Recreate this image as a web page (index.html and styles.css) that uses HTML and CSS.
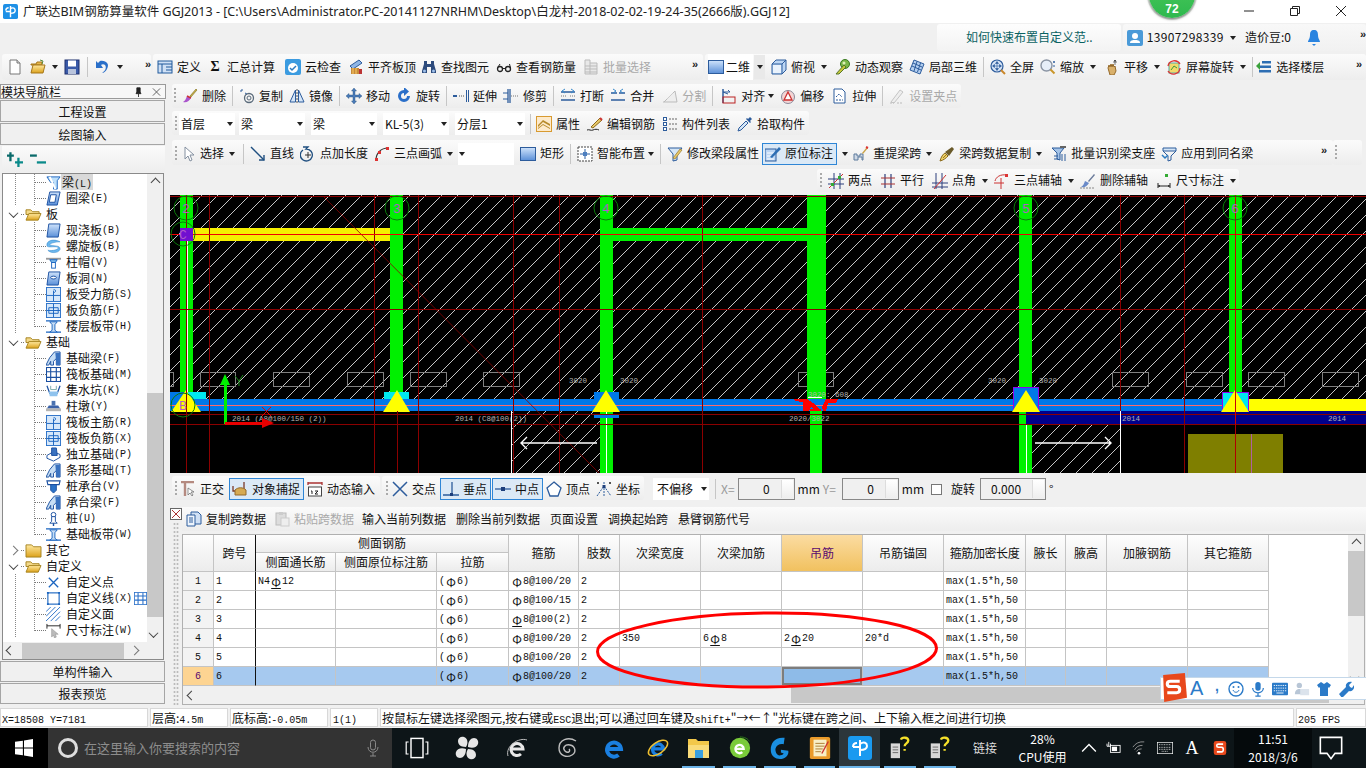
FILE: index.html
```html
<!DOCTYPE html>
<html lang="zh">
<head>
<meta charset="utf-8">
<title>广联达BIM钢筋算量软件 GGJ2013</title>
<link rel="stylesheet" href="styles.css">
</head>
<body>
<svg class="defs" aria-hidden="true">
<defs>
<linearGradient id="gb" x1="0" y1="0" x2="0" y2="1"><stop offset="0" stop-color="#cfe3fb"/><stop offset="1" stop-color="#5a8fd8"/></linearGradient>
<linearGradient id="gy" x1="0" y1="0" x2="0" y2="1"><stop offset="0" stop-color="#ffe9a0"/><stop offset="1" stop-color="#dca21c"/></linearGradient>
<pattern id="hatch" width="16" height="16" patternUnits="userSpaceOnUse"><path d="M-1 17 17 -1" stroke="#c4c4c4" stroke-width="1" shape-rendering="crispEdges"/></pattern>

<symbol id="i-doc" viewBox="0 0 16 16"><path d="M3 1h7l3 3v11H3z" fill="#fff" stroke="#777"/><path d="M10 1v3h3" fill="#ddd" stroke="#777"/></symbol>
<symbol id="i-open" viewBox="0 0 16 16"><path d="M1 5h5l1-2h5v3H1z" fill="#e8b84a" stroke="#a5761a"/><path d="M1 14l2-8h12l-2 8z" fill="url(#gy)" stroke="#a5761a"/><path d="M10 1l3 1-1 3" fill="none" stroke="#5a8a3a"/></symbol>
<symbol id="i-save" viewBox="0 0 16 16"><rect x="1" y="1" width="14" height="14" fill="#3a5aa8" stroke="#1d2f6d"/><rect x="4" y="1.500" width="8" height="6" fill="#fff"/><rect x="4" y="10" width="8" height="5" fill="#b9c4dc"/></symbol>
<symbol id="i-undo" viewBox="0 0 16 16"><path d="M5 2C11 1 15 5 12 10c-1 2-3 4-5 4 3-2 5-5 3-8-1-1-3-1-4 0l2 3H1V2l2 2z" fill="#2a6fc9"/></symbol>
<symbol id="i-def" viewBox="0 0 16 16"><rect x="1" y="2" width="14" height="12" fill="#cfe0f5" stroke="#215a9c"/><path d="M1 5h14M5 5v9M9 8h6M9 11h6" stroke="#215a9c"/></symbol>
<symbol id="i-cloud" viewBox="0 0 16 16"><rect x="0" y="0" width="16" height="16" rx="2" fill="#3b9be0"/><circle cx="8" cy="9" r="5" fill="#fff"/><path d="M5 9l2 2 4-4" stroke="#2a7ac0" stroke-width="1.500" fill="none"/></symbol>
<symbol id="i-flush" viewBox="0 0 16 16"><path d="M2 7L11 1l3 3-9 6z" fill="#8fb6e6" stroke="#2d5c9c"/><rect x="3" y="9" width="8" height="6" fill="#c58a3a"/><rect x="11" y="10" width="3" height="5" fill="#b33"/><path d="M5 9v6M8 9v6" stroke="#fc6"/></symbol>
<symbol id="i-bino" viewBox="0 0 16 16"><path d="M3 2h3v3h4V2h3v3l2 7v2H10V8H6v6H1v-2l2-7z" fill="#2d4b7c"/><circle cx="3.500" cy="12" r="1.500" fill="#9fc0ea"/><circle cx="12.500" cy="12" r="1.500" fill="#9fc0ea"/></symbol>
<symbol id="i-glass" viewBox="0 0 16 16"><circle cx="4" cy="10" r="2.500" fill="none" stroke="#222" stroke-width="1.300"/><circle cx="12" cy="10" r="2.500" fill="none" stroke="#222" stroke-width="1.300"/><path d="M6.500 9.500h3M2 8l2-3M14.500 9l-1-4" stroke="#222"/></symbol>
<symbol id="i-batch" viewBox="0 0 16 16"><path d="M2 1h5v3h7v11H2z" fill="#e8e8e8" stroke="#bbb"/><path d="M2 7h12M2 10h12M2 13h12M7 4v11" stroke="#bbb"/></symbol>
<symbol id="i-rect" viewBox="0 0 16 16"><rect x=".5" y="1.500" width="15" height="13" fill="url(#gb)" stroke="#2d5c9c"/></symbol>
<symbol id="i-top" viewBox="0 0 16 16"><path d="M1 5l4-4h10v10l-4 4H1z" fill="#bcd6f4" stroke="#2d5c9c"/><path d="M1 5h10v10M11 5l4-4" fill="none" stroke="#2d5c9c"/><rect x="2" y="6" width="8" height="8" fill="#e9f2fc"/></symbol>
<symbol id="i-orbit" viewBox="0 0 16 16"><circle cx="10" cy="5" r="4.500" fill="#7ab648" stroke="#3a7a22"/><path d="M1 15L9 6l2 2-7 7z" fill="#c8c83a" stroke="#56762a"/><circle cx="9" cy="4" r="1.500" fill="#dff0b8"/></symbol>
<symbol id="i-local" viewBox="0 0 16 16"><path d="M5 1l10 4-4 10L1 11z" fill="#b4cff0" stroke="#2d5c9c"/><path d="M4 4l9 4M3 7l9 4M8 2.500L5 12M11.500 4l-3 9" stroke="#2d5c9c"/></symbol>
<symbol id="i-full" viewBox="0 0 16 16"><circle cx="7" cy="7" r="6" fill="#d8e6f8" stroke="#2d5c9c" stroke-width="1.200"/><path d="M7 3v8M3 7h8M7 2.500L5.500 4.500h3zM7 11.500l-1.500-2h3zM2.500 7l2-1.500v3zM11.500 7l-2-1.500v3z" stroke="#2d5c9c" fill="#2d5c9c" stroke-width=".6"/><path d="M11 11l4 4" stroke="#c9862a" stroke-width="2"/></symbol>
<symbol id="i-zoom" viewBox="0 0 16 16"><circle cx="6.500" cy="6.500" r="5.500" fill="#e6eef8" stroke="#8a94a3" stroke-width="1.400"/><path d="M10.500 10.500l4 4" stroke="#c9962a" stroke-width="2"/><path d="M13 3h2M14 2v2M13 7h2" stroke="#2d5c9c"/></symbol>
<symbol id="i-pan" viewBox="0 0 16 16"><path d="M4 9l1-3 1 2 1-3 1 3 1-3 1 3 1-1 1 5-2 4H6z" fill="#d9b06a" stroke="#94692a"/><path d="M11 1v5M9 3h4M11 1l-1 1h2z" stroke="#444" fill="#444" stroke-width=".7"/></symbol>
<symbol id="i-scr" viewBox="0 0 16 16"><rect x="3" y="4" width="10" height="10" fill="#f3d96a" stroke="#5aa"/><path d="M5 11l3-4 3 2" stroke="#3a9a3a" fill="none"/><path d="M2 7a6.500 6.500 0 0 1 12-2M14 9a6.500 6.500 0 0 1-12 3" stroke="#d33" fill="none" stroke-width="1.300"/></symbol>
<symbol id="i-floor" viewBox="0 0 16 16"><path d="M6 2h9v2.500H6zM3 6.500h12V9H3zM3 11h12v2.500H3z" fill="#2d6eb3"/><path d="M0 7l4-4v8z" fill="#3aa13a"/></symbol>
<symbol id="i-del" viewBox="0 0 16 16"><path d="M8 8l6-7 1 1-6 7z" fill="#c9b24a" stroke="#7a6a1a" stroke-width=".6"/><path d="M9 10C7 13 5 15 1 14c2-1 3-3 4-6z" fill="#a5c"/><path d="M5 8l4 2" stroke="#c33" stroke-width="1.500"/></symbol>
<symbol id="i-copy" viewBox="0 0 16 16"><circle cx="10" cy="10" r="4.500" fill="none" stroke="#5a6a7a" stroke-width="1.300"/><circle cx="10" cy="10" r="2" fill="none" stroke="#5a6a7a"/><path d="M2 2h3M2 2v3M6 5L8 6" stroke="#2d5c9c" fill="none" stroke-dasharray="2 1"/></symbol>
<symbol id="i-mirror" viewBox="0 0 16 16"><path d="M6.500 2v12H1zM9.500 2v12H15z" fill="#d6e6f8" stroke="#2d5c9c"/><path d="M8 1v14" stroke="#555" stroke-dasharray="2 1"/></symbol>
<symbol id="i-move" viewBox="0 0 16 16"><path d="M8 0l2.500 3H9v4h4V5.500L16 8l-3 2.500V9H9v4h1.500L8 16l-2.500-3H7V9H3v1.500L0 8l3-2.500V7h4V3H5.500z" fill="#4a7ab8" stroke="#24507f" stroke-width=".4"/></symbol>
<symbol id="i-rot" viewBox="0 0 16 16"><path d="M8 2a6 6 0 1 0 6 6h-3a3 3 0 1 1-3-3v3l5-4.500L8-1z" fill="#2a6fc9"/></symbol>
<symbol id="i-ext" viewBox="0 0 16 16"><path d="M0 8h4" stroke="#2d5c9c" stroke-width="2"/><path d="M6 8h5" stroke="#555" stroke-dasharray="1 1"/><path d="M13.500 2v12M15.500 2v12" stroke="#2d5c9c"/></symbol>
<symbol id="i-trim" viewBox="0 0 16 16"><path d="M5 1v14M7 1v14" stroke="#2d5c9c" stroke-width="1.300"/><path d="M0 5h5M0 11h5" stroke="#2d5c9c"/><path d="M8 8h7" stroke="#777" stroke-dasharray="1 1"/></symbol>
<symbol id="i-brk" viewBox="0 0 16 16"><path d="M1 4h14M1 12h14" stroke="#2d5c9c" stroke-width="1.500" fill="none"/><path d="M5 1L2 3l3 2M11 1l3 2-3 2" stroke="#3a8acb" fill="none"/><path d="M1 8h5M10 8h5" stroke="#777" stroke-dasharray="1 1"/></symbol>
<symbol id="i-mrg" viewBox="0 0 16 16"><path d="M1 5h6M9 5h6M1 12h14" stroke="#2d5c9c" stroke-width="1.500"/><path d="M3 1l3 2-3 2M13 1l-3 2 3 2" stroke="#3a8acb" fill="none"/></symbol>
<symbol id="i-split" viewBox="0 0 16 16"><path d="M1 14h14M2 14L13 3l2 11" fill="#eee" stroke="#bbb"/><path d="M5 11l6-6" stroke="#ccc"/></symbol>
<symbol id="i-align" viewBox="0 0 16 16"><path d="M2 1v14" stroke="#2d5c9c" stroke-width="1.500"/><path d="M2 4h7l-2-2M2 4l5 2" stroke="#2d5c9c" fill="none"/><rect x="2" y="9" width="12" height="6" fill="none" stroke="#b22"/></symbol>
<symbol id="i-off" viewBox="0 0 16 16"><circle cx="8" cy="9" r="6.500" fill="#f4d5d5" stroke="#8a8a9a"/><path d="M8 4l4 8H4z" fill="#fff" stroke="#c33" stroke-width="1.300"/></symbol>
<symbol id="i-str" viewBox="0 0 16 16"><path d="M2 1h8l3 3v11H2z" fill="#fff" stroke="#2d5c9c"/><path d="M4 12h7M4 9l3-3 3 3" stroke="#2d5c9c" stroke-dasharray="2 1" fill="none"/></symbol>
<symbol id="i-grip" viewBox="0 0 16 16"><path d="M2 14l9-12 3 2-9 11z" fill="#eee" stroke="#c4c4c4"/><path d="M1 15h4M8 15h5" stroke="#bbb" stroke-dasharray="2 1"/></symbol>
<symbol id="i-attr" viewBox="0 0 16 16"><rect x=".5" y=".5" width="15" height="15" fill="#fdeacb" stroke="#d89a30"/><path d="M2 9l5-5 7 4v2l-7-4-5 5zM2 12l5-4 7 4v1l-7-4-5 4z" fill="#b78a2a"/></symbol>
<symbol id="i-edit" viewBox="0 0 16 16"><path d="M4 11L13 2l2 2-9 8z" fill="#e7c86a" stroke="#8b6a1a"/><path d="M13 2l2 2" stroke="#c33" stroke-width="2"/><path d="M0 14c2-1 4 1 6 0s4-1 6 0" stroke="#222" fill="none"/></symbol>
<symbol id="i-list" viewBox="0 0 16 16"><rect x="1.500" y="1.500" width="3" height="3" fill="#fff" stroke="#2d5c9c"/><rect x="1.500" y="6.500" width="3" height="3" fill="#fff" stroke="#2d5c9c"/><rect x="1.500" y="11.500" width="3" height="3" fill="#fff" stroke="#2d5c9c"/><path d="M7 3h8M7 8h8M7 13h8" stroke="#666" stroke-dasharray="2 1"/></symbol>
<symbol id="i-pick" viewBox="0 0 16 16"><path d="M1 15l1-3 7-7 2 2-7 7z" fill="#d5e6f7" stroke="#2d5c9c"/><path d="M9 3l4 4 1-1-1-1 2-2-2-2-2 2-1-1z" fill="#2d5c9c"/></symbol>
<symbol id="i-sel" viewBox="0 0 16 16"><path d="M5 1v12l3-3 2 5 2-1-2-5h4z" fill="#fff" stroke="#8490a0"/></symbol>
<symbol id="i-line" viewBox="0 0 16 16"><path d="M1 1l13 13" stroke="#1f4f80" stroke-width="1.400"/><path d="M14 9v5H9" fill="none" stroke="#1f4f80" stroke-width="1.400"/></symbol>
<symbol id="i-len" viewBox="0 0 16 16"><path d="M3 1h5l-2 2a6 6 0 1 1-3 1" fill="none" stroke="#1f4f80" stroke-width="1.300"/><path d="M8 6v6M5 9h6" stroke="#333"/></symbol>
<symbol id="i-arc" viewBox="0 0 16 16"><path d="M2 14C2 7 7 2 14 2" fill="none" stroke="#333" stroke-width="1.200"/><rect x="1" y="12" width="3" height="3" fill="#d33"/><rect x="4" y="5" width="3" height="3" fill="#d33"/><rect x="12" y="1" width="3" height="3" fill="#d33"/></symbol>
<symbol id="i-smart" viewBox="0 0 16 16"><rect x="1" y="1" width="14" height="14" fill="#fff" stroke="#444" stroke-dasharray="2 1"/><path d="M8 3v10M3 8h10" stroke="#2d5c9c"/><rect x="6" y="6" width="4" height="4" fill="#4d7fc0"/></symbol>
<symbol id="i-funnel" viewBox="0 0 16 16"><path d="M1 2h14l-5 6v6l-4 1V8z" fill="#d5e6f7" stroke="#2d5c9c"/><path d="M6 12l7-9 2 1-7 9z" fill="#e7c86a" stroke="#8b6a1a" stroke-width=".6"/></symbol>
<symbol id="i-orig" viewBox="0 0 16 16"><rect x="0" y="3" width="11" height="12" fill="#bcd6f4" stroke="#2d5c9c"/><path d="M2 7h7M2 10h7M2 13h7" stroke="#fff"/><path d="M5 11L14 1l2 2-9 9z" fill="#2d6eb3"/></symbol>
<symbol id="i-rebeam" viewBox="0 0 16 16"><path d="M1 14V8h3v2h3V8h3v6h-1v-3H5v3z" fill="#cfd9e6" stroke="#5c7a9c"/><path d="M9 7l5-6 1 1-5 6z" fill="#c9a44a"/><path d="M13 1l2 1" stroke="#d33" stroke-width="2"/></symbol>
<symbol id="i-spancopy" viewBox="0 0 16 16"><path d="M1 15c1-4 3-7 5-8l3 3c-2 2-4 4-8 5z" fill="#ecd06a" stroke="#8b6a1a"/><path d="M6 6l7-5 2 2-5 7z" fill="#6a5a2a"/><path d="M4 12l3-3" stroke="#a07a18"/></symbol>
<symbol id="i-batchid" viewBox="0 0 16 16"><path d="M1 2h12l-4 5v7l-3-1V7z" fill="#a5c4e8" stroke="#2d5c9c"/><path d="M3 10h4M3 13h4M11 8v7M14 8v7" stroke="#2d5c9c"/><path d="M9 1l6 0" stroke="#666" stroke-width="2"/></symbol>
<symbol id="i-apply" viewBox="0 0 16 16"><path d="M2 2h13v3H2z" fill="#d5e6f7" stroke="#2d5c9c"/><path d="M2 5l5 5v5l3-1v-4l5-5" fill="none" stroke="#2d5c9c"/><path d="M1 9l3 3 3-3" stroke="#2a7ac0" fill="none" stroke-width="1.500"/></symbol>
<symbol id="i-two" viewBox="0 0 16 16"><path d="M6 0v16M12 0v16M0 6h16M0 11h16" stroke="#2d3f7c"/><path d="M1 15L15 1" stroke="#c33"/><rect x="3" y="10" width="3" height="3" fill="#3a3"/><rect x="10" y="3" width="3" height="3" fill="#3a3"/></symbol>
<symbol id="i-para" viewBox="0 0 16 16"><path d="M5 1v14M11 1v14" stroke="#2d3f7c" stroke-width="1.200"/><path d="M1 5h14M1 11h14" stroke="#a33" stroke-width="1.200"/></symbol>
<symbol id="i-ang" viewBox="0 0 16 16"><path d="M4 0v16M10 0v16M0 10h16M0 14h16" stroke="#2d3f7c"/><path d="M2 16L14 2" stroke="#c33"/></symbol>
<symbol id="i-arc3" viewBox="0 0 16 16"><path d="M1 8C2 4 6 1 13 2" fill="none" stroke="#c33"/><path d="M7 5v11M0 10h10" stroke="#c33"/><rect x="11" y="1" width="3" height="3" fill="#d33"/></symbol>
<symbol id="i-delaxis" viewBox="0 0 16 16"><path d="M8 8l6-7 1 1-6 7z" fill="#6a7a9a"/><path d="M9 10C7 13 5 15 1 14c2-1 3-3 4-6z" fill="#6a8ac8"/><path d="M0 15h14" stroke="#888" stroke-dasharray="2 1"/></symbol>
<symbol id="i-dim" viewBox="0 0 16 16"><rect x="9" y="1" width="3" height="3" fill="#3a3"/><path d="M2 10v5M14 10v5M2 13h12" stroke="#222"/><path d="M2 13l2-1v2zM14 13l-2-1v2z" fill="#222"/></symbol>
<symbol id="i-ortho" viewBox="0 0 16 16"><path d="M1 1h13M5 1v14" stroke="#b58a80" stroke-width="2.400"/><path d="M8 7v7l2-2 2 3 1-1-2-3h3z" fill="#fff" stroke="#666" stroke-width=".7"/></symbol>
<symbol id="i-snap" viewBox="0 0 16 16"><path d="M1 5v5h3M12 1v9" stroke="#7a3a2a" stroke-width="1.300" fill="none"/><path d="M3 9c3-3 8-3 11 0v5H3z" fill="#d6aa52" stroke="#94692a"/></symbol>
<symbol id="i-dyn" viewBox="0 0 16 16"><path d="M1 1v3M15 1v3M1 2h14" stroke="#a33" stroke-width="1.300"/><rect x="1.500" y="6" width="13" height="9" fill="#fff" stroke="#444"/><path d="M4 10h1v3M8 10h3l-3 3h3" fill="none" stroke="#222"/></symbol>
<symbol id="i-cross" viewBox="0 0 16 16"><path d="M1 1l14 14M15 1L1 15" stroke="#2d5c9c" stroke-width="1.500"/></symbol>
<symbol id="i-perp" viewBox="0 0 16 16"><path d="M0 14h16M9 1v13" stroke="#2d5c9c" stroke-width="1.300"/><rect x="7" y="12" width="3" height="3" fill="#1d3f7c"/></symbol>
<symbol id="i-mid" viewBox="0 0 16 16"><path d="M0 8h16" stroke="#2d5c9c" stroke-width="1.300"/><rect x="6" y="6" width="4" height="4" fill="#1d3f7c"/></symbol>
<symbol id="i-vert" viewBox="0 0 16 16"><path d="M8 1l7 6-3 8H4L1 7z" fill="#fff" stroke="#2d5c9c" stroke-width="1.300"/></symbol>
<symbol id="i-coord" viewBox="0 0 16 16"><path d="M1 15L8 5M8 5l7 10M8 1v14" stroke="#2d5c9c" stroke-dasharray="2 1" fill="none"/><rect x="6.500" y="4" width="3" height="3" fill="#1d3f7c"/><rect x="1" y="1" width="2" height="2" fill="#555"/><rect x="13" y="1" width="2" height="2" fill="#555"/></symbol>
<symbol id="i-cpd" viewBox="0 0 16 16"><path d="M5 1h7l3 3v9H5z" fill="#cfe0f5" stroke="#2d5c9c"/><path d="M1 4h8v11H1z" fill="#eef5fd" stroke="#2d5c9c"/><path d="M3 7h4M3 9h4M3 11h4" stroke="#2d5c9c"/></symbol>
<symbol id="i-pst" viewBox="0 0 16 16"><rect x="2" y="2" width="10" height="12" fill="#ddd" stroke="#bbb"/><rect x="5" y="1" width="4" height="3" fill="#ccc"/><rect x="7" y="7" width="8" height="8" fill="#eee" stroke="#ccc"/></symbol>

<symbol id="t-beam" viewBox="0 0 16 16"><path d="M1 2h14l-3 4v9H8V8H5z" fill="#bfe0fa" stroke="#1a64c0"/><path d="M4 2l6 13" stroke="#fff" stroke-width="2"/></symbol>
<symbol id="t-ring" viewBox="0 0 16 16"><path d="M4 1h11l-3 14H1z" fill="url(#gb)" stroke="#1a4fa0"/><path d="M5 4h6L9.500 12H3.500z" fill="#fff" stroke="#1a4fa0"/></symbol>
<symbol id="t-slab" viewBox="0 0 16 16"><path d="M3 1h12l-2 14H1z" fill="url(#gb)" stroke="#1a4fa0"/></symbol>
<symbol id="t-spiral" viewBox="0 0 16 16"><path d="M15 3C8-1 0 2 1 7c0 3 9 0 12 2 1 2-5 4-11 3 2 3 11 4 13-1 1-5-9-3-11-5 0-1 5-3 11-3z" fill="#6cb8ee" stroke="#2a80c8" stroke-width=".5"/></symbol>
<symbol id="t-cap" viewBox="0 0 16 16"><path d="M0 3h16v2H0z" fill="#9a9a9a"/><path d="M4 5h8l-2 3H6z" fill="#7ab8ea" stroke="#1a64c0"/><rect x="6" y="8" width="4" height="6" fill="#fff" stroke="#1a64c0"/></symbol>
<symbol id="t-hole" viewBox="0 0 16 16"><path d="M3 1h12l-2 14H1z" fill="url(#gb)" stroke="#1a4fa0"/><ellipse cx="8" cy="7" rx="3" ry="1.500" fill="#fff" stroke="#1a4fa0"/></symbol>
<symbol id="t-grid1" viewBox="0 0 16 16"><rect x=".5" y=".5" width="15" height="15" fill="#d7e8fa" stroke="#2a70c8"/><path d="M1 9h14M8 4v11" stroke="#1a64c0"/><path d="M8 3c3-1 3 3 0 3" fill="none" stroke="#1a64c0"/></symbol>
<symbol id="t-grid2" viewBox="0 0 16 16"><rect x=".5" y=".5" width="15" height="15" fill="#d7e8fa" stroke="#2a70c8"/><path d="M1 8h14M8 1v14M3 5h10v6H3z" fill="none" stroke="#1a64c0"/></symbol>
<symbol id="t-band" viewBox="0 0 16 16"><path d="M0 2h16M0 14h16" stroke="#1a64c0" stroke-width="1.500"/><path d="M4 3h8L9.500 6v6L12 14H4l2.500-2V6z" fill="#c7def5" stroke="#1a64c0"/></symbol>
<symbol id="t-fbeam" viewBox="0 0 16 16"><path d="M0 15l4-8 5-6h6v14h-4V8L8 11v4H5v-4l-2 4z" fill="#c7def5" stroke="#1a4fa0"/><path d="M10 2h5v13h-4z" fill="#3a72c0"/></symbol>
<symbol id="t-raft" viewBox="0 0 16 16"><rect x=".5" y=".5" width="15" height="15" fill="#fff" stroke="#1a4fa0" stroke-width="1.200"/><path d="M5 1v14M11 1v14M1 5h14M1 11h14" stroke="#1a4fa0" stroke-width="1.200"/></symbol>
<symbol id="t-sump" viewBox="0 0 16 16"><path d="M1 3l3 8h8l3-8" fill="none" stroke="#1a4fa0" stroke-width="1.300"/><path d="M3 9h10l-1 5H4z" fill="#8fc3ee"/><path d="M5 3v4h6V3" fill="none" stroke="#7aa"/></symbol>
<symbol id="t-pier" viewBox="0 0 16 16"><rect x="6" y="2" width="4" height="5" fill="#4a72b0"/><path d="M3 7h10l2 3H1z" fill="#3a62a8"/><rect x="0" y="10" width="16" height="3" fill="#b4b4b4"/></symbol>
<symbol id="t-iso" viewBox="0 0 16 16"><path d="M1 9l7-4 7 3v3l-7 4-7-3z" fill="#fff" stroke="#1a4fa0"/><path d="M6 1h5l1 8H6z" fill="#3a72c0" stroke="#1a4fa0"/></symbol>
<symbol id="t-pile" viewBox="0 0 16 16"><path d="M1 2h14l-1 4H2z" fill="#fff" stroke="#1a4fa0" stroke-width="1.200"/><path d="M5 6h6v6l-3 3-3-3z" fill="#2a72c8" stroke="#1a4fa0"/></symbol>
<symbol id="t-p" viewBox="0 0 16 16"><circle cx="8" cy="4" r="2.500" fill="#fff" stroke="#1a4fa0"/><path d="M6 6h4v5l2 2H4l2-2z" fill="#fff" stroke="#1a4fa0"/><path d="M8 13v3" stroke="#1a4fa0" stroke-width="1.500"/></symbol>
<symbol id="t-x" viewBox="0 0 16 16"><path d="M3 3l10 10M13 3L3 13" stroke="#1a64c0" stroke-width="1.400"/></symbol>
<symbol id="t-sq" viewBox="0 0 16 16"><rect x="2" y="2" width="12" height="12" fill="#fff" stroke="#1a64c0" stroke-width="1.200"/><path d="M1 1h2v2H1zM13 1h2v2h-2zM1 13h2v2H1zM13 13h2v2h-2z" fill="#1a64c0"/></symbol>
<symbol id="t-hat" viewBox="0 0 16 16"><path d="M0 5l5-5M0 10L10 0M0 15L15 0M5 15L15 5M10 15l5-5" stroke="#2a70c8"/></symbol>
<symbol id="t-dim" viewBox="0 0 16 16"><path d="M1 1v5M15 1v5M1 3h14" stroke="#222"/><path d="M6 6v9l2-2 1 3 2-1-1-3h3z" fill="#bbb" stroke="#888" stroke-width=".5"/></symbol>
<symbol id="t-folder" viewBox="0 0 18 16"><path d="M1 3h5l2 2h7v3H1z" fill="#f3d98a" stroke="#a5821e"/><path d="M1 14L4 7h13l-3 7z" fill="url(#gy)" stroke="#a5821e"/></symbol>
<symbol id="t-fclose" viewBox="0 0 18 16"><path d="M1 2h6l2 2h8v11H1z" fill="url(#gy)" stroke="#a5821e"/></symbol>
<symbol id="t-mini" viewBox="0 0 16 16"><rect x=".5" y=".5" width="15" height="15" fill="#fff" stroke="#2a70c8"/><path d="M5 1v14M11 1v14M1 5h4M11 5h4M1 10h4M11 10h4M5 5h6M5 10h6" stroke="#2a70c8" stroke-width="1.300"/></symbol>
</defs>
</svg>

<div class="app">
  <header class="title">
    <svg class="applogo" viewBox="0 0 16 16"><rect width="16" height="16" rx="2" fill="#1e90e6"/><path d="M8 2v12M8 5c3-2 5 0 5 2s-2 3-5 3M8 8H3M6 4c-2 0-3 1-3 3" fill="none" stroke="#fff" stroke-width="1.500"/></svg>
    <span class="title-text">广联达BIM钢筋算量软件 GGJ2013 - [C:\Users\Administrator.PC-20141127NRHM\Desktop\白龙村-2018-02-02-19-24-35(2666版).GGJ12]</span>
    <span class="badge">72</span>
    <div class="winctl">
      <svg viewBox="0 0 12 12"><path d="M1 6h10" stroke="#222"/></svg>
      <svg viewBox="0 0 12 12"><path d="M1.500 3.500h7v7h-7zM3.500 3.500v-2h7v7h-2" fill="none" stroke="#222"/></svg>
      <svg viewBox="0 0 12 12"><path d="M1 1l10 10M11 1L1 11" stroke="#222"/></svg>
    </div>
  </header>

  <div class="noticebar">
    <div class="notice">如何快速布置自定义范..</div>
    <div class="user">
      <svg class="ic" viewBox="0 0 16 16"><rect width="16" height="16" rx="2" fill="#4a9ad8"/><circle cx="8" cy="6" r="3" fill="#fff"/><path d="M3 13c0-3 3-3 5-3s5 0 5 3z" fill="#fff"/></svg>
      <span class="phone">13907298339</span><i class="dd"></i>
      <span class="bean">造价豆:0</span>
      <svg class="bell" viewBox="0 0 14 18"><path d="M7 1c3 0 4 2 4 5 0 4 2 5 2 7H1c0-2 2-3 2-7 0-3 1-5 4-5z" fill="#2a84e0"/><path d="M5 15h4l-2 2z" fill="#2a84e0"/></svg>
      <span class="more">»</span>
    </div>
  </div>

  <div class="tbrow rowa">
    <div class="tb g1">
      <svg class="ic"><use href="#i-doc"/></svg>
      <svg class="ic"><use href="#i-open"/></svg><i class="dd"></i>
      <svg class="ic"><use href="#i-save"/></svg><i class="sep"></i>
      <svg class="ic"><use href="#i-undo"/></svg><i class="dd"></i>
      <span class="more">»</span>
    </div>
    <div class="tb g2">
      <span class="ti"><svg class="ic"><use href="#i-def"/></svg>定义</span>
      <span class="ti"><b class="sigma">Σ</b>汇总计算</span>
      <span class="ti"><svg class="ic"><use href="#i-cloud"/></svg>云检查</span>
      <span class="ti"><svg class="ic"><use href="#i-flush"/></svg>平齐板顶</span>
      <span class="ti"><svg class="ic"><use href="#i-bino"/></svg>查找图元</span>
      <span class="ti"><svg class="ic"><use href="#i-glass"/></svg>查看钢筋量</span>
      <span class="ti off"><svg class="ic"><use href="#i-batch"/></svg>批量选择</span>
      <span class="more push">»</span>
    </div>
    <div class="tb g3">
      <span class="ti lit"><svg class="ic"><use href="#i-rect"/></svg>二维</span><span class="ddbox"><i class="dd"></i></span>
      <span class="ti"><svg class="ic"><use href="#i-top"/></svg>俯视</span><i class="dd"></i>
      <span class="ti nudge2"><svg class="ic"><use href="#i-orbit"/></svg>动态观察</span>
      <span class="ti"><svg class="ic"><use href="#i-local"/></svg>局部三维</span><i class="sep"></i>
      <span class="ti"><svg class="ic"><use href="#i-full"/></svg>全屏</span>
      <span class="ti"><svg class="ic"><use href="#i-zoom"/></svg>缩放</span><i class="dd"></i>
      <span class="ti nudge2"><svg class="ic"><use href="#i-pan"/></svg>平移</span><i class="dd"></i>
      <span class="ti"><svg class="ic"><use href="#i-scr"/></svg>屏幕旋转</span><i class="dd"></i><i class="sep"></i>
      <span class="ti back3"><svg class="ic"><use href="#i-floor"/></svg>选择楼层</span>
      <span class="more push">»</span>
    </div>
  </div>

  <main class="main">
    <aside class="nav">
      <div class="nav-head"><span>模块导航栏</span><span class="nav-ctl"><svg viewBox="0 0 10 12"><path d="M3 1h4v5l1 2H2l1-2zM5 8v4" fill="#222" stroke="#222"/></svg><svg viewBox="0 0 10 10"><path d="M1 1l8 8M9 1L1 9" stroke="#555"/></svg></span></div>
      <div class="nav-btn">工程设置</div>
      <div class="nav-btn">绘图输入</div>
      <div class="nav-tools">
        <svg viewBox="0 0 14 14"><path d="M3 1v8M0 4h6" stroke="#0a6a6a" stroke-width="2"/><path d="M10 6v8M7 10h7" stroke="#0a8a8a" stroke-width="2"/></svg>
        <svg viewBox="0 0 14 14"><path d="M0 4h6" stroke="#0a6a6a" stroke-width="2"/><path d="M6 10h8" stroke="#0a8a8a" stroke-width="2"/></svg>
      </div>
      <div class="tree-box">
        <div class="tree-main">
          <div class="tree">
            <div class="row child sel-row"><i class="tick"></i><svg class="tic"><use href="#t-beam"/></svg><span class="sel">梁<i class="k">(L)</i></span></div>
            <div class="row child"><i class="tick"></i><svg class="tic"><use href="#t-ring"/></svg>圈梁<i class="k">(E)</i></div>
            <div class="row grp open"><i class="chev down"></i><i class="gtick"></i><svg class="fic"><use href="#t-folder"/></svg>板</div>
            <div class="row child"><i class="tick"></i><svg class="tic"><use href="#t-slab"/></svg>现浇板<i class="k">(B)</i></div>
            <div class="row child"><i class="tick"></i><svg class="tic"><use href="#t-spiral"/></svg>螺旋板<i class="k">(B)</i></div>
            <div class="row child"><i class="tick"></i><svg class="tic"><use href="#t-cap"/></svg>柱帽<i class="k">(V)</i></div>
            <div class="row child"><i class="tick"></i><svg class="tic"><use href="#t-hole"/></svg>板洞<i class="k">(N)</i></div>
            <div class="row child"><i class="tick"></i><svg class="tic"><use href="#t-grid1"/></svg>板受力筋<i class="k">(S)</i></div>
            <div class="row child"><i class="tick"></i><svg class="tic"><use href="#t-grid2"/></svg>板负筋<i class="k">(F)</i></div>
            <div class="row child last"><i class="tick"></i><svg class="tic"><use href="#t-band"/></svg>楼层板带<i class="k">(H)</i></div>
            <div class="row grp open"><i class="chev down"></i><i class="gtick"></i><svg class="fic"><use href="#t-folder"/></svg>基础</div>
            <div class="row child noroot"><i class="tick"></i><svg class="tic"><use href="#t-fbeam"/></svg>基础梁<i class="k">(F)</i></div>
            <div class="row child noroot"><i class="tick"></i><svg class="tic"><use href="#t-raft"/></svg>筏板基础<i class="k">(M)</i></div>
            <div class="row child noroot"><i class="tick"></i><svg class="tic"><use href="#t-sump"/></svg>集水坑<i class="k">(K)</i></div>
            <div class="row child noroot"><i class="tick"></i><svg class="tic"><use href="#t-pier"/></svg>柱墩<i class="k">(Y)</i></div>
            <div class="row child noroot"><i class="tick"></i><svg class="tic"><use href="#t-grid1"/></svg>筏板主筋<i class="k">(R)</i></div>
            <div class="row child noroot"><i class="tick"></i><svg class="tic"><use href="#t-grid2"/></svg>筏板负筋<i class="k">(X)</i></div>
            <div class="row child noroot"><i class="tick"></i><svg class="tic"><use href="#t-iso"/></svg>独立基础<i class="k">(P)</i></div>
            <div class="row child noroot"><i class="tick"></i><svg class="tic"><use href="#t-fbeam"/></svg>条形基础<i class="k">(T)</i></div>
            <div class="row child noroot"><i class="tick"></i><svg class="tic"><use href="#t-pile"/></svg>桩承台<i class="k">(V)</i></div>
            <div class="row child noroot"><i class="tick"></i><svg class="tic"><use href="#t-fbeam"/></svg>承台梁<i class="k">(F)</i></div>
            <div class="row child noroot"><i class="tick"></i><svg class="tic"><use href="#t-p"/></svg>桩<i class="k">(U)</i></div>
            <div class="row child noroot last"><i class="tick"></i><svg class="tic"><use href="#t-band"/></svg>基础板带<i class="k">(W)</i></div>
            <div class="row grp"><i class="chev"></i><i class="gtick"></i><svg class="fic"><use href="#t-fclose"/></svg>其它</div>
            <div class="row grp open"><i class="chev down"></i><i class="gtick"></i><svg class="fic"><use href="#t-folder"/></svg>自定义</div>
            <div class="row child"><i class="tick"></i><svg class="tic"><use href="#t-x"/></svg>自定义点</div>
            <div class="row child"><i class="tick"></i><svg class="tic"><use href="#t-sq"/></svg>自定义线<i class="k">(X)</i><svg class="tic mini"><use href="#t-mini"/></svg></div>
            <div class="row child"><i class="tick"></i><svg class="tic"><use href="#t-hat"/></svg>自定义面</div>
            <div class="row child last"><i class="tick"></i><svg class="tic"><use href="#t-dim"/></svg>尺寸标注<i class="k">(W)</i></div>
          </div>
          <div class="vbar navv"><span class="arr"><i class="chev up"></i></span><span class="track"><b class="thumb navt"></b></span><span class="arr"><i class="chev down"></i></span></div>
        </div>
        <div class="hbar navh"><span class="arr"><i class="chev left"></i></span><b class="hthumb"></b><span class="arr"><i class="chev"></i></span></div>
      </div>
      <div class="nav-btn low">单构件输入</div>
      <div class="nav-btn low">报表预览</div>
    </aside>

    <section class="work">
      <div class="tbrow rowb">
        <div class="tb gb">
          <i class="handle"></i>
          <span class="ti"><svg class="ic"><use href="#i-del"/></svg>删除</span><i class="sep"></i>
          <span class="ti"><svg class="ic"><use href="#i-copy"/></svg>复制</span>
          <span class="ti"><svg class="ic"><use href="#i-mirror"/></svg>镜像</span><i class="sep"></i>
          <span class="ti"><svg class="ic"><use href="#i-move"/></svg>移动</span>
          <span class="ti"><svg class="ic"><use href="#i-rot"/></svg>旋转</span><i class="sep"></i>
          <span class="ti"><svg class="ic"><use href="#i-ext"/></svg>延伸</span>
          <span class="ti"><svg class="ic"><use href="#i-trim"/></svg>修剪</span><i class="sep"></i>
          <span class="ti"><svg class="ic"><use href="#i-brk"/></svg>打断</span>
          <span class="ti"><svg class="ic"><use href="#i-mrg"/></svg>合并</span>
          <span class="ti off nudge2"><svg class="ic"><use href="#i-split"/></svg>分割</span><i class="sep"></i>
          <span class="ti nudge2"><svg class="ic"><use href="#i-align"/></svg>对齐<i class="dd tight"></i></span>
          <span class="ti"><svg class="ic"><use href="#i-off"/></svg>偏移</span>
          <span class="ti nudge2"><svg class="ic"><use href="#i-str"/></svg>拉伸</span><i class="sep"></i>
          <span class="ti off"><svg class="ic"><use href="#i-grip"/></svg>设置夹点</span>
        </div>
      </div>
      <div class="tbrow rowc">
        <div class="tb gc">
          <i class="handle"></i>
          <span class="combo c56">首层<i class="dd"></i></span>
          <span class="combo c66">梁<i class="dd"></i></span>
          <span class="combo c66">梁<i class="dd"></i></span>
          <span class="combo c66">KL-5(3)<i class="dd"></i></span>
          <span class="combo c70">分层1<i class="dd"></i></span><i class="sep"></i>
          <span class="ti"><svg class="ic"><use href="#i-attr"/></svg>属性</span>
          <span class="ti"><svg class="ic"><use href="#i-edit"/></svg>编辑钢筋</span>
          <span class="ti"><svg class="ic"><use href="#i-list"/></svg>构件列表</span>
          <span class="ti"><svg class="ic"><use href="#i-pick"/></svg>拾取构件</span>
        </div>
      </div>
      <div class="tbrow rowd">
        <div class="tb gd">
          <i class="handle"></i>
          <span class="ti"><svg class="ic"><use href="#i-sel"/></svg>选择</span><i class="dd"></i><i class="sep nudge3"></i>
          <span class="ti"><svg class="ic"><use href="#i-line"/></svg>直线</span>
          <span class="ti"><svg class="ic"><use href="#i-len"/></svg>点加长度</span>
          <span class="ti"><svg class="ic"><use href="#i-arc"/></svg>三点画弧</span><i class="dd"></i>
          <span class="combo c56"><i class="dd"></i></span>
          <span class="ti"><svg class="ic"><use href="#i-rect"/></svg>矩形</span><i class="sep"></i>
          <span class="ti"><svg class="ic"><use href="#i-smart"/></svg>智能布置<i class="dd tight"></i></span><i class="sep"></i>
          <span class="ti"><svg class="ic"><use href="#i-funnel"/></svg>修改梁段属性</span>
          <span class="ti on back3"><svg class="ic"><use href="#i-orig"/></svg>原位标注</span><i class="dd"></i>
          <span class="ti"><svg class="ic"><use href="#i-rebeam"/></svg>重提梁跨</span><i class="dd"></i>
          <span class="ti nudge2"><svg class="ic"><use href="#i-spancopy"/></svg>梁跨数据复制</span><i class="dd"></i>
          <span class="ti nudge4"><svg class="ic"><use href="#i-batchid"/></svg>批量识别梁支座</span>
          <span class="ti"><svg class="ic"><use href="#i-apply"/></svg>应用到同名梁</span>
          <span class="more push">»</span>
        </div>
        <div class="tb gd2"><i class="handle"></i></div>
      </div>
      <div class="tbrow rowe">
        <div class="tb ge">
          <i class="handle"></i>
          <span class="ti"><svg class="ic"><use href="#i-two"/></svg>两点</span>
          <span class="ti"><svg class="ic"><use href="#i-para"/></svg>平行</span>
          <span class="ti"><svg class="ic"><use href="#i-ang"/></svg>点角</span><i class="dd"></i>
          <span class="ti"><svg class="ic"><use href="#i-arc3"/></svg>三点辅轴</span><i class="dd"></i>
          <span class="ti"><svg class="ic"><use href="#i-delaxis"/></svg>删除辅轴</span>
          <span class="ti"><svg class="ic"><use href="#i-dim"/></svg>尺寸标注</span><i class="dd"></i>
        </div>
      </div>

      <svg class="canvas" viewBox="0 0 1196 278" shape-rendering="crispEdges">
        <rect width="1196" height="278" fill="#000"/>
        <rect width="1196" height="204" fill="url(#hatch)"/>
        <rect x="341" y="216" width="89" height="62" fill="url(#hatch)"/>
        <rect x="862" y="216" width="88" height="62" fill="url(#hatch)"/>
        <g fill="none" stroke="#808080">
          <rect x="-2" y="177.500" width="5" height="14"/><rect x="30.500" y="177.500" width="35" height="14"/><rect x="103.500" y="177.500" width="36" height="14"/><rect x="177.500" y="177.500" width="36" height="14"/><rect x="240.500" y="177.500" width="36" height="14"/><rect x="313.500" y="177.500" width="36" height="14"/><rect x="628.500" y="177.500" width="35" height="14"/><rect x="942.500" y="177.500" width="36" height="14"/><rect x="1016.500" y="177.500" width="36" height="14"/><rect x="1078.500" y="177.500" width="36" height="14"/><rect x="1152.500" y="177.500" width="36" height="14"/>
        </g>
        <g fill="#00f000">
          <rect x="10" width="13" height="204"/><rect x="220" width="13" height="204"/><rect x="430" width="13" height="204"/><rect x="637" width="19" height="204"/><rect x="849" width="13" height="204"/><rect x="1059" width="13" height="204"/>
          <rect x="443" y="33" width="194" height="13"/>
          <rect x="430" y="216" width="13" height="62"/><rect x="640" y="216" width="12" height="62"/><rect x="849" y="216" width="13" height="62"/>
        </g>
        <rect x="23" y="33" width="197" height="13" fill="#f5f000"/>
        <path d="M17.500 46V204M436.500 216V278M856.500 216V278" stroke="#fff"/>
        <rect x="0" y="204" width="1196" height="12" fill="#0078e8"/>
        <rect x="856" y="216" width="340" height="13" fill="#00008b"/>
        <rect x="1071" y="204" width="125" height="12" fill="#ff0"/>
        <path d="M0 210.500H1052" stroke="#ff6a6a"/>
        <rect x="0" y="197" width="17" height="7" fill="#0078e8"/><rect x="17" y="197" width="19" height="7" fill="#00e8f0"/>
        <rect x="214" y="197" width="25" height="7" fill="#00e8f0"/>
        <rect x="424" y="197" width="25" height="7" fill="#0078e8"/><rect x="424" y="220" width="25" height="3" fill="#0078e8"/>
        <rect x="843.500" y="192.500" width="25" height="24" fill="#0078e8" stroke="#9000f0"/>
        <rect x="1052.500" y="197.500" width="26" height="19" fill="#00e8f0" stroke="#9000f0"/>
        <g fill="#ff0" shape-rendering="auto">
          <path d="M16 195L31 217H1zM227 195L240 217H213zM436 195L450 217H422zM856 195L870 217H842zM1065 195L1079 217H1051z"/>
        </g>
        <g stroke="#8b0000" fill="none">
          <path d="M39.500 0V278M204.500 0V278M248.500 0V278M343.500 0V278M389.500 0V278M532.500 0V278M950.500 0V278M1014.500 0V278M0 1.500H1196M0 114.500H1196M0 219.500H1196M0 229.500H1196"/>
          <path d="M16.500 0V278M227.500 216V278" stroke-width="1"/>
          <path d="M153 1L429 278" shape-rendering="auto" stroke-width=".8"/>
        </g>
        <path d="M950.500 216V278" stroke="#fff"/>
        <path d="M0 39.500H1196" stroke="#f00000"/>
        <path d="M1065.500 0V278" stroke="#d00000"/>
        <g fill="none" stroke="#0a7a0a" shape-rendering="auto">
          <circle cx="16" cy="13" r="12"/><circle cx="227" cy="13" r="12"/><circle cx="436" cy="13" r="12"/><circle cx="856" cy="13" r="12"/><circle cx="1065" cy="13" r="12"/><circle cx="13" cy="39" r="12"/><circle cx="13" cy="210" r="12"/>
        </g>
        <rect x="10" y="33" width="13" height="13" fill="#7010d0"/>
        <g class="cv-lab"><text x="16" y="18">2</text><text x="227" y="18">3</text><text x="436" y="18">4</text><text x="856" y="18">5</text><text x="1065" y="18">6</text><text x="13" y="44">C</text><text x="13" y="215">B</text></g>
        <g class="cv-txt">
          <text x="399" y="188">3020</text><text x="450" y="188">3020</text><text x="818" y="188">3020</text><text x="869" y="188">3020</text>
          <text x="62" y="226">2014 (A8@100/150 (2))</text><text x="285" y="226">2014 (C8@100(2))</text><text x="619" y="226">2020/3022</text><text x="952" y="226">2014</text><text x="1158" y="226">2014</text><text x="638" y="202">3020: 608</text>
        </g>
        <path d="M55 229V184" stroke="#00f000" stroke-width="3"/><path d="M55 179L50 190H60z" fill="#00f000" shape-rendering="auto"/>
        <path d="M55 228H96" stroke="#e80000" stroke-width="3"/><path d="M104 228L92 223V233z" fill="#e80000" shape-rendering="auto"/>
        <path d="M69 191V186L65 181M69 186L73 180" stroke="#1a8a1a" fill="none" shape-rendering="auto"/>
        <path d="M92 212l9 9M101 212l-9 9" stroke="#e80000" shape-rendering="auto"/>
        <path d="M351 248H427M357 242l-6 6 6 6M865 248H941M935 242l6 6-6 6" stroke="#fff" stroke-width="1.400" fill="none" shape-rendering="auto"/>
        <path d="M341.500 216V278" stroke="#fff"/>
        <rect x="1018" y="239" width="95" height="39" fill="#7f7f00"/>
        <path d="M1081.500 239V278" stroke="#b060a0"/>
        <path d="M1065.500 229V278" stroke="#b00000"/>
        <path d="M624 204h13l6 4 8 8-4 0-6-4-2 4h-6v-9l-8-1zM668 204h-12l-4 8-1 4h5l2-8h8zM640 214h13v2h-13z" fill="#f00"/>
        <path d="M638 202H652" stroke="#fff"/>
      </svg>

      <div class="tbrow rowf">
        <div class="tb gf1">
          <i class="handle"></i>
          <span class="ti"><svg class="ic"><use href="#i-ortho"/></svg>正交</span>
          <span class="ti on"><svg class="ic"><use href="#i-snap"/></svg>对象捕捉</span>
          <span class="ti"><svg class="ic"><use href="#i-dyn"/></svg>动态输入</span>
        </div>
        <div class="tb gf2">
          <i class="handle"></i>
          <span class="ti"><svg class="ic"><use href="#i-cross"/></svg>交点</span>
          <span class="ti on"><svg class="ic"><use href="#i-perp"/></svg>垂点</span>
          <span class="ti on"><svg class="ic"><use href="#i-mid"/></svg>中点</span>
          <span class="ti"><svg class="ic"><use href="#i-vert"/></svg>顶点</span>
          <span class="ti"><svg class="ic"><use href="#i-coord"/></svg>坐标</span>
        </div>
        <div class="tb gf3">
          <span class="combo c56">不偏移<i class="dd"></i></span><i class="sep"></i>
          <span class="lbl off">X=</span><span class="spin">0<i class="spn"></i></span><span class="lbl">mm</span>
          <span class="lbl off">Y=</span><span class="spin yspin">0<i class="spn"></i></span><span class="lbl">mm</span>
          <i class="chk"></i><span class="lbl rot">旋转</span><span class="spin w66">0.000<i class="spn"></i></span><span class="lbl">°</span>
        </div>
      </div>

      <div class="panel">
        <div class="panel-side">
          <svg viewBox="0 0 12 12"><rect x=".5" y=".5" width="11" height="11" fill="#fff" stroke="#666"/><path d="M2 2l8 8M10 2l-8 8" stroke="#a33"/></svg>
          <i class="dots"></i>
        </div>
        <div class="panel-body">
          <div class="gridbar">
            <span class="ti"><svg class="ic"><use href="#i-cpd"/></svg>复制跨数据</span>
            <span class="ti off"><svg class="ic"><use href="#i-pst"/></svg>粘贴跨数据</span>
            <span class="ti">输入当前列数据</span>
            <span class="ti">删除当前列数据</span>
            <span class="ti">页面设置</span>
            <span class="ti">调换起始跨</span>
            <span class="ti">悬臂钢筋代号</span>
          </div>
          <div class="gridwrap">
            <div class="gridtop">
              <div class="tablepane">
                <table class="sheet">
                  <colgroup><col class="w31"><col class="w42"><col class="w80"><col class="w101"><col class="w72"><col class="w70"><col class="w41"><col class="w81"><col class="w81"><col class="w81"><col class="w81"><col class="w82"><col class="w40"><col class="w41"><col class="w81"><col class="w81"></colgroup>
                  <thead>
                    <tr><th rowspan="2"></th><th rowspan="2" class="fz">跨号</th><th colspan="3">侧面钢筋</th><th rowspan="2">箍筋</th><th rowspan="2">肢数</th><th rowspan="2">次梁宽度</th><th rowspan="2">次梁加筋</th><th rowspan="2" class="hot">吊筋</th><th rowspan="2">吊筋锚固</th><th rowspan="2" class="tight-h">箍筋加密长度</th><th rowspan="2">腋长</th><th rowspan="2">腋高</th><th rowspan="2">加腋钢筋</th><th rowspan="2">其它箍筋</th></tr>
                    <tr><th class="sub">侧面通长筋</th><th class="sub">侧面原位标注筋</th><th class="sub">拉筋</th></tr>
                  </thead>
                  <tbody>
                    <tr><td class="num">1</td><td class="fz">1</td><td>N4<i class="rb hrb">Φ</i>12</td><td></td><td>(<i class="rb">Φ</i>6)</td><td><i class="rb">Φ</i>8@100/20</td><td>2</td><td></td><td></td><td></td><td></td><td>max(1.5*h,50</td><td></td><td></td><td></td><td></td></tr>
                    <tr><td class="num">2</td><td class="fz">2</td><td></td><td></td><td>(<i class="rb">Φ</i>6)</td><td><i class="rb">Φ</i>8@100/15</td><td>2</td><td></td><td></td><td></td><td></td><td>max(1.5*h,50</td><td></td><td></td><td></td><td></td></tr>
                    <tr><td class="num">3</td><td class="fz">3</td><td></td><td></td><td>(<i class="rb">Φ</i>6)</td><td><i class="rb hrb">Φ</i>8@100(2)</td><td>2</td><td></td><td></td><td></td><td></td><td>max(1.5*h,50</td><td></td><td></td><td></td><td></td></tr>
                    <tr><td class="num">4</td><td class="fz">4</td><td></td><td></td><td>(<i class="rb">Φ</i>6)</td><td><i class="rb">Φ</i>8@100/20</td><td>2</td><td>350</td><td>6<i class="rb hrb">Φ</i>8</td><td>2<i class="rb hrb">Φ</i>20</td><td>20*d</td><td>max(1.5*h,50</td><td></td><td></td><td></td><td></td></tr>
                    <tr><td class="num">5</td><td class="fz">5</td><td></td><td></td><td>(<i class="rb">Φ</i>6)</td><td><i class="rb">Φ</i>8@100/20</td><td>2</td><td></td><td></td><td></td><td></td><td>max(1.5*h,50</td><td></td><td></td><td></td><td></td></tr>
                    <tr class="cur"><td class="num">6</td><td class="fz">6</td><td></td><td></td><td>(<i class="rb">Φ</i>6)</td><td><i class="rb">Φ</i>8@100/20</td><td>2</td><td></td><td></td><td class="cell"></td><td></td><td>max(1.5*h,50</td><td></td><td></td><td></td><td></td></tr>
                  </tbody>
                </table>
              </div>
              <div class="vbar gridv"><span class="arr"><i class="chev up"></i></span><span class="track"><b class="thumb gridt"></b></span><span class="arr"><i class="chev down"></i></span></div>
            </div>
            <div class="hbar gridh"><span class="arr"><i class="chev left"></i></span><b class="hthumb"></b></div>
          </div>
        </div>
      </div>
    </section>
  </main>

  <footer class="status">
    <span class="st s1"><i class="k">X=18508 Y=7181</i></span>
    <span class="st s2">层高:<i class="k">4.5m</i></span>
    <span class="st s3">底标高:<i class="k">-0.05m</i></span>
    <span class="st s4"><i class="k">1(1)</i></span>
    <span class="st s5">按鼠标左键选择梁图元,按右键或<i class="k">ESC</i>退出;可以通过回车键及<i class="k">shift+</i>"→←↑"光标键在跨之间、上下输入框之间进行切换</span>
    <span class="st s6"><i class="k">205 FPS</i></span>
  </footer>

  <nav class="taskbar">
    <span class="tk start"><svg viewBox="0 0 16 16"><path d="M0 2.500l7-1v6H0zM8 1.300L16 0v7.500H8zM0 8.500h7v6l-7-1zM8 8.500h8V16l-8-1.300z" fill="#fff"/></svg></span>
    <span class="tk search"><i class="cortana"></i><span class="sq">在这里输入你要搜索的内容</span><svg class="micic" viewBox="0 0 12 18"><rect x="3.500" y="1" width="5" height="10" rx="2.500" fill="none" stroke="#8a8a8a"/><path d="M1 8c0 7 10 7 10 0M6 14v3M3 17h6" fill="none" stroke="#8a8a8a"/></svg></span>
    <span class="tk"><svg viewBox="0 0 20 18"><rect x="5" y="1" width="10" height="16" fill="none" stroke="#fff" stroke-width="1.200"/><path d="M3 4H1v10h2M17 4h2v10h-2" fill="none" stroke="#fff"/></svg></span>
    <span class="tk"><svg viewBox="0 0 24 24"><path d="M11 11C5 11 3 8 3 5s3-5 6-4 5 5 2 10zM13 11c0-6 3-9 6-9s5 3 4 6-5 5-10 3zM13 13c6 0 8 3 8 6s-3 5-6 4-5-5-2-10zM11 13c0 6-3 9-6 9s-5-3-4-6 5-5 10-3z" fill="#e6e6e6"/></svg></span>
    <span class="tk"><svg viewBox="0 0 24 24"><path d="M6 13h12a6 6 0 1 0-2 5" fill="none" stroke="#e8e8e8" stroke-width="3"/><path d="M3 20C0 10 14 1 22 4" fill="none" stroke="#bbb"/></svg></span>
    <span class="tk"><svg viewBox="0 0 22 24"><path d="M20 5C12 0 3 4 3 12s8 10 13 7 3-9-2-10-8 3-5 6 6 0 4-2" fill="none" stroke="#bdbdbd" stroke-width="1.400"/></svg></span>
    <span class="tk"><svg viewBox="0 0 24 24"><path d="M5 13h14a7 7 0 1 0-2.500 6" fill="none" stroke="#1a7fe0" stroke-width="4"/></svg></span>
    <span class="tk"><svg viewBox="0 0 26 26"><path d="M7 14h12a6 6 0 1 0-2 5" fill="none" stroke="#1a7fe0" stroke-width="3.500"/><ellipse cx="13" cy="13" rx="12" ry="6" transform="rotate(-35 13 13)" fill="none" stroke="#f0c030" stroke-width="1.600"/></svg></span>
    <span class="tk under"><svg viewBox="0 0 24 24"><path d="M1 3h8l2 2h11v17H1z" fill="#f2c84a"/><rect x="1" y="9" width="21" height="13" fill="#f9dc7a"/><rect x="8" y="14" width="8" height="8" fill="#3aa0e0"/></svg></span>
    <span class="tk under"><svg viewBox="0 0 24 26"><circle cx="12" cy="13" r="11" fill="#7acb3a"/><path d="M8 14h8a4.500 4.500 0 1 0-1.500 3.500" fill="none" stroke="#fff" stroke-width="2.500"/><path d="M12 1c5 0 9 2 10 5" stroke="#2a7a1a" fill="none"/></svg></span>
    <span class="tk under"><svg viewBox="0 0 24 26"><path d="M17 2C6 1 2 8 2 15s5 10 10 10 10-4 9-9l-8-1v3l3 1c-1 2-3 2-5 2-3-1-4-4-4-7 1-4 5-6 9-5z" fill="#1a8fe0"/></svg></span>
    <span class="tk under"><svg viewBox="0 0 24 26"><rect x="1" y="1" width="22" height="24" rx="2" fill="#e99a2a"/><rect x="5" y="4" width="14" height="18" fill="#f8efc8"/><path d="M7 8h10M7 11h10M7 14h8M7 17h6" stroke="#a87a30"/><path d="M14 19L21 6" stroke="#c33" stroke-width="1.500"/></svg></span>
    <span class="tk under active"><svg viewBox="0 0 24 24"><rect width="24" height="24" rx="3" fill="#1a9af0"/><path d="M12 4v16M12 8c4-3 7-1 7 2s-3 4-7 4M12 11H5M9 7c-3 0-4 1-4 4" fill="none" stroke="#fff" stroke-width="2"/></svg></span>
    <span class="tk under"><svg viewBox="0 0 24 26"><rect x="2" y="8" width="10" height="16" fill="#d8d8d8"/><path d="M4 12h6M4 15h6M4 18h6" stroke="#666"/><path d="M13 4c1-3 8-3 8 1 0 3-4 3-4 6M17 14v2" fill="none" stroke="#f5e02a" stroke-width="2.500"/></svg></span>
    <span class="tk under"><svg viewBox="0 0 24 26"><rect x="2" y="8" width="10" height="16" fill="#d8d8d8"/><path d="M4 12h6M4 15h6M4 18h6" stroke="#666"/><path d="M13 4c1-3 8-3 8 1 0 3-4 3-4 6M17 14v2" fill="none" stroke="#f5e02a" stroke-width="2.500"/></svg></span>
    <span class="tk link">链接</span>
    <span class="tk cpu"><span>28%</span><span>CPU使用</span></span>
    <span class="tk tray"><svg viewBox="0 0 14 10"><path d="M1 8l6-6 6 6" fill="none" stroke="#fff" stroke-width="1.200"/></svg></span>
    <span class="tk tray"><svg viewBox="0 0 18 16"><rect x="5" y="5" width="11" height="8" fill="none" stroke="#fff"/><rect x="6.500" y="6.500" width="6" height="5" fill="#fff"/><path d="M3 1v5M1 3v3h4V3" fill="none" stroke="#fff"/></svg></span>
    <span class="tk tray"><svg viewBox="0 0 16 16"><path d="M1 7a14 14 0 0 1 13-6M3 10a10 10 0 0 1 9-5M5 12a6 6 0 0 1 6-3" fill="none" stroke="#9a9a9a"/><circle cx="8" cy="14" r="1.500" fill="#fff"/></svg></span>
    <span class="tk tray"><svg viewBox="0 0 24 18"><rect x=".5" y=".5" width="23" height="17" fill="none" stroke="#fff"/><path d="M3 4h18M3 8h18M3 11h18M7 14h10" stroke="#fff" stroke-dasharray="1.500 1"/></svg></span>
    <span class="tk tray atxt">A</span>
    <span class="tk tray"><svg viewBox="0 0 16 18"><rect width="16" height="18" rx="3" fill="#e8481c"/><path d="M12 4H6C3 4 3 8 6 8h4c3 0 3 6 0 6H4" fill="none" stroke="#fff" stroke-width="2"/></svg></span>
    <span class="tk clock"><span>11:51</span><span>2018/3/6</span></span>
    <span class="tk"><svg viewBox="0 0 18 18"><path d="M1 1h16v12h-5l-3 4-3-4H1z" fill="none" stroke="#fff" stroke-width="1.200"/></svg></span>
    <span class="tk"></span>
  </nav>

  <svg class="ellipse" viewBox="0 0 360 90"><ellipse cx="180" cy="45" rx="169.500" ry="37" transform="rotate(-.6 180 45)" fill="none" stroke="#f00" stroke-width="3"/></svg>

  <div class="ime">
    <svg class="ime-s" viewBox="0 0 26 28"><path d="M3 2L24 0l2 24-22 4z" fill="#e8481c"/><path d="M19 8H10c-4 0-4 5 0 5h6c4 0 4 6 0 6H7" fill="none" stroke="#fff" stroke-width="3"/></svg>
    <span class="ime-a">A</span>
    <span class="ime-c">,</span>
    <svg viewBox="0 0 16 16"><circle cx="8" cy="8" r="7" fill="none" stroke="#2a7ac8" stroke-width="1.400"/><path d="M5 9c1 3 5 3 6 0" fill="none" stroke="#2a7ac8"/><circle cx="5.500" cy="6" r="1" fill="#2a7ac8"/><circle cx="10.500" cy="6" r="1" fill="#2a7ac8"/></svg>
    <svg viewBox="0 0 16 18"><rect x="5" y="1" width="6" height="10" rx="3" fill="#2a7ac8"/><path d="M2 8c0 7 12 7 12 0M8 14v3M5 17h6" fill="none" stroke="#2a7ac8" stroke-width="1.400"/></svg>
    <svg viewBox="0 0 18 14"><rect width="18" height="14" rx="1" fill="#2a7ac8"/><path d="M2 3h14M2 6h14M2 9h14" stroke="#fff" stroke-dasharray="1.500 1"/><path d="M5 11.500h8" stroke="#fff"/></svg>
    <svg viewBox="0 0 18 16"><circle cx="6" cy="4" r="3" fill="#b8c6d6"/><path d="M1 14c0-5 3-6 5-6s5 1 5 6z" fill="#b8c6d6"/><rect x="7" y="8" width="10" height="7" fill="#dbe3ec"/></svg>
    <svg viewBox="0 0 16 16"><path d="M5 1L1 4l2 3 1-1v9h8V6l1 1 2-3-4-3-3 2z" fill="#2a7ac8"/></svg>
    <svg viewBox="0 0 16 16"><path d="M1 13l7-7c-1-3 2-6 6-5l-3 3 1 2 2 1 2-3c1 4-2 7-5 6l-7 7z" fill="#2a7ac8"/></svg>
  </div>
</div>
</body>
</html>
```
FILE: styles.css
```css
* { box-sizing: border-box; }
html, body { margin: 0; padding: 0; }
body { width: 1366px; height: 768px; overflow: hidden; background: #f0f0f0; color: #111; font: 12px/1.2 "Noto Sans CJK SC", "Noto Sans", sans-serif; }
i { font-style: normal; }
.defs { position: absolute; width: 0; height: 0; }
.app { position: relative; width: 1366px; height: 768px; display: flex; flex-direction: column; overflow: hidden; }

/* title bar */
.title { height: 23px; flex: none; background: #fff; display: flex; align-items: center; padding-left: 3px; position: relative; font-size: 12.500px; }
.applogo { width: 15px; height: 15px; margin-right: 5px; }
.title-text { font-family: "Noto Sans", "Noto Sans CJK SC", sans-serif; color: #222; white-space: nowrap; }
.badge { position: absolute; left: 1149px; top: -28px; width: 46px; height: 46px; border-radius: 50%; background: linear-gradient(#4fcc5c, #2eb84e); box-shadow: 0 1px 3px #666, 0 0 0 2px #dfe8df; color: #fff; font: bold 12px "Liberation Sans", sans-serif; text-align: center; padding-top: 30px; }
.winctl { position: absolute; right: 19px; top: 5px; display: flex; gap: 34px; }
.winctl svg { width: 12px; height: 12px; }

/* notice */
.noticebar { height: 31px; flex: none; display: flex; padding: 1px 0 3px 937px; gap: 2px; }
.notice { width: 187px; background: linear-gradient(#fdfdfd, #f3f3f3); border-radius: 3px; color: #0a6262; padding: 6px 0 0 29px; }
.user { flex: 1; display: flex; align-items: center; padding-left: 4px; background: linear-gradient(#f8f8f8, #f1f1f1); border-radius: 3px; }
.phone { margin-left: 4px; letter-spacing: .35px; }
.user .dd { margin: 0 9px 0 6px; }
.bell { width: 14px; height: 18px; margin-left: 9px; }
.bean { width: 53px; }
.more { font: bold 11px/1 "Liberation Sans", sans-serif; color: #222; margin-top: -6px; }
.user .more { margin-left: 39px; }
.push { margin-left: auto; }

/* toolbars */
.tbrow { flex: none; display: flex; white-space: nowrap; }
.tb { display: flex; align-items: center; height: 100%; gap: 8px; background: linear-gradient(#fbfbfb, #ededed); border-radius: 3px; }
.ic { width: 16px; height: 16px; flex: none; }
.ti { display: inline-flex; align-items: center; gap: 4px; flex: none; }
.ti.off { color: #a9a9a9; }
.ti.on { border: 1px solid #2f86d6; background: #dbe9f6; height: 22px; padding: 0 3px 0 2px; }
.dd { display: inline-block; width: 0; height: 0; border: 3.500px solid transparent; border-top: 4px solid #222; border-bottom: 0; flex: none; }
.dd.tight { margin-left: -1px; }
.sep { width: 1px; height: 20px; background: #c6c6c6; flex: none; }
.sigma { width: 14px; font: bold 14px "Liberation Serif", serif; text-align: center; margin-right: 1px; }
.handle { width: 2px; height: 16px; margin: 0 0 0 2px; flex: none; background: repeating-linear-gradient(#aaa 0 2px, transparent 2px 4px); }
.lit { background: #fff; height: 100%; padding: 0 3px 0 0; gap: 2px; }
.ddbox { width: 11px; height: 24px; background: #e9e9e9; display: flex; align-items: center; justify-content: center; }
.nudge2 { margin-left: 2px; }
.nudge3 { margin-left: 3px; }
.nudge4 { margin-left: 4px; }
.back3 { margin-left: -3px; }

.rowa { height: 26px; margin-bottom: 4px; padding-left: 2px; gap: 2px; }
.g1 { width: 149px; padding-left: 5px; gap: 7px; }
.g1 .dd { margin: 0 -1px; }
.g2 { width: 550px; padding: 0 5px 0 4px; gap: 7px; }
.g2 .ti:nth-child(3) { margin-left: 3px; }
.g2 .ti:nth-child(5) { margin-left: -2px; }
.g3 { flex: 1; padding: 0 4px 0 3px; gap: 6px; }
.g3 .ddbox { margin-left: -5px; }
.g1 .more, .g2 .more, .g3 .more { margin-left: auto; }

.main { flex: none; height: 624px; display: flex; }
.work { width: 1196px; margin-left: 5px; display: flex; flex-direction: column; }
.rowb { height: 24px; margin-bottom: 3px; padding-left: 2px; }
.gb { width: 789px; gap: 6px; padding-left: 0; }
.rowc { height: 24px; margin-bottom: 5px; padding-left: 2px; }
.gc { width: 637px; gap: 7px; padding: 2px 0 0 1px; }
.gc .handle { margin-right: -5px; }
.gc .combo { margin-right: -1px; }
.gc .combo.c56 { margin-right: -3px; }
.gc .sep { margin: 0 -2px 0 -1px; }
.combo { display: flex; align-items: center; justify-content: space-between; height: 22px; background: #fff; padding: 0 2px; flex: none; }
.c56 { width: 56px; } .c66 { width: 66px; } .c70 { width: 70px; }
.rowd { height: 25px; margin-bottom: 4px; padding-left: 2px; gap: 0; }
.gd { width: 1161px; gap: 6px; padding: 2px 6px 0 1px; }
.gd .handle { margin-right: -3px; }
.gd .dd { margin: 0 -1px; }
.gd .dd.tight { margin: 0 0 0 -1px; }
.gd2 { width: 29px; }
.rowe { height: 23px; margin-bottom: 3px; padding-left: 647px; }
.ge { width: 422px; gap: 8px; padding-left: 1px; }
.ge .handle { margin-right: -2px; }
.ge .dd { margin: 0 -2px; }
.canvas { width: 1196px; height: 278px; display: block; flex: none; margin-bottom: 3px; }
.cv-lab text { font: 13px "Liberation Mono", monospace; fill: #b05cc8; text-anchor: middle; }
.cv-txt text { font: 7.500px "Liberation Mono", monospace; fill: #b4b4b4; }

.rowf { height: 24px; margin-bottom: 7px; padding-left: 2px; gap: 2px; }
.gf1 { width: 208px; gap: 5px; padding: 2px 0 0 1px; }
.gf1 .handle { margin-right: -2px; }
.gf1 .ti:last-child { margin-left: -2px; }
.gf2 { width: 262px; gap: 4px; padding: 2px 0 0 2px; }
.gf2 .ti.on { margin-right: -3px; }
.gf2 .ti:nth-last-child(2), .gf2 .ti:last-child { margin-left: 2px; }
.gf3 { width: 409px; gap: 3px; padding: 2px 0 0 7px; background: none; }
.gf3 .combo { padding-left: 4px; }
.gf3 .sep { margin: 0 2px 0 3px; }
.lbl { flex: none; }
.lbl.off { color: #999; }
.lbl.rot { margin: 0 2px 0 6px; }
.spin { width: 57px; height: 22px; border: 1px solid #888; background: #f0f0f0; display: flex; align-items: center; justify-content: flex-end; gap: 12px; flex: none; padding-right: 1px; }
.spn { width: 12px; height: 18px; margin-left: -1px; background: linear-gradient(#fff, #eee); border-left: 1px solid #ddd; }
.spin.w66 { width: 66px; }
.yspin { margin-left: 3px; }
.chk { width: 11px; height: 11px; border: 1px solid #777; background: #fff; margin-left: 4px; flex: none; }

/* nav */
.nav { width: 165px; flex: none; display: flex; flex-direction: column; }
.nav-head { height: 15px; border: 1px solid #9a9a9a; background: #f7f7f7; display: flex; justify-content: space-between; align-items: center; line-height: 13px; margin-bottom: 1px; width: 166px; }
.nav-ctl { display: flex; gap: 9px; padding-right: 4px; }
.nav-ctl svg { width: 9px; height: 10px; }
.nav-btn { height: 22px; border: 1px solid #a5a5a5; background: #f0f0f0; text-align: center; line-height: 21px; margin-bottom: 1px; }
.nav-btn.low { height: 21px; line-height: 20px; }
.nav-tools { height: 26px; margin: 0 0 1px 2px; background: linear-gradient(#fbfbfb, #eee); display: flex; align-items: center; gap: 7px; padding-left: 5px; }
.nav-tools svg { width: 16px; height: 16px; }
.tree-box { height: 487px; margin: 0 1px 1px 2px; border: 1px solid #8a8a8a; background: #fff; display: flex; flex-direction: column; overflow: hidden; flex: none; }
.tree-main { flex: 1; display: flex; min-height: 0; }
.tree { flex: none; width: 144px; overflow: hidden; height: 468px; }
.row { height: 16px; display: flex; align-items: center; white-space: nowrap; line-height: 16px; }
.child { padding-left: 32px; background-image: repeating-linear-gradient(#888 0 1px, transparent 1px 2px), repeating-linear-gradient(#888 0 1px, transparent 1px 2px); background-size: 1px 100%, 1px 100%; background-position: 12px 0, 31px 0; background-repeat: no-repeat; }
.child.last { background-size: 1px 100%, 1px 9px; }
.child.noroot { background-image: repeating-linear-gradient(#888 0 1px, transparent 1px 2px); background-size: 1px 100%; background-position: 31px 0; }
.child.noroot.last { background-size: 1px 9px; }
.tick { width: 11px; border-top: 1px dotted #777; flex: none; }
.tic { width: 15px; height: 15px; margin: 0 5px 0 0; flex: none; }
.fic { width: 17px; height: 15px; margin-right: 4px; flex: none; }
.grp { padding-left: 7px; }
.gtick { width: 3px; border-top: 1px dotted #777; margin: 0 1px; flex: none; }
.chev { width: 7px; height: 7px; border: solid #777; border-width: 1.500px 1.500px 0 0; transform: rotate(45deg); display: inline-block; flex: none; margin-right: 3px; }
.chev.down { transform: rotate(135deg) translate(-1px, 1px); border-color: #444; }
.chev.up { transform: rotate(-45deg); border-color: #444; margin: 0; }
.chev.left { transform: rotate(-135deg); border-color: #444; margin: 0; }
.sel { background: #d9d9d9; margin-left: -1px; padding: 0 1px; }
.sel-row .tic { margin-right: 1px; }
.k { font: 10px "Liberation Mono", monospace; }
.mini { margin: 0 0 0 2px; width: 13px; height: 13px; }
.vbar { width: 16px; flex: none; display: flex; flex-direction: column; background: #f0f0f0; }
.arr { width: 16px; height: 16px; display: flex; align-items: center; justify-content: center; flex: none; }
.track { flex: 1; display: flex; flex-direction: column; }
.thumb { display: block; background: #c8c8c8; }
.navt { height: 224px; margin-top: 203px; }
.hbar { display: flex; align-items: center; flex: none; background: #f0f0f0; height: 17px; }
.navh .hthumb { width: 102px; height: 16px; background: #c8c8c8; margin: 0 4px; }
.navh .arr { width: 15px; }

/* lower panel */
.panel { height: 198px; display: flex; flex: none; }
.panel-side { width: 12px; flex: none; display: flex; flex-direction: column; align-items: center; padding-top: 1px; gap: 2px; }
.panel-side svg { width: 12px; height: 12px; }
.dots { width: 6px; flex: 1; background: radial-gradient(#bbb 1px, transparent 1.100px) 0 0 / 3px 4px; }
.panel-body { flex: 1; display: flex; flex-direction: column; }
.gridbar { height: 24px; margin-bottom: 3px; display: flex; align-items: center; gap: 8px; padding-left: 4px; background: linear-gradient(#fbfbfb, #ededed); }
.gridbar .ti:nth-child(n+4) { margin-left: 2px; }
.gridwrap { height: 171px; border: 1px solid #b0b0b0; margin-right: 1px; display: flex; flex-direction: column; background: #fff; }
.gridtop { flex: 1; display: flex; min-height: 0; }
.tablepane { flex: 1; background: #fff; overflow: hidden; }
.sheet { width: 1086px; table-layout: fixed; border-collapse: separate; border-spacing: 0; }
.w31 { width: 31px; } .w42 { width: 42px; } .w80 { width: 80px; } .w101 { width: 101px; } .w72 { width: 72px; } .w70 { width: 70px; } .w41 { width: 41px; } .w81 { width: 81px; } .w82 { width: 82px; } .w40 { width: 40px; }
.sheet th { font-weight: 400; height: 18px; padding: 0; background: linear-gradient(#fdfdfd, #ececec); border-right: 1px solid #c4c4c4; border-bottom: 1px solid #c4c4c4; text-align: center; }
.sheet th.sub { height: 19px; }
.sheet th.hot { background: linear-gradient(#fbdca2, #f1c15f); color: #5a0a70; }
.sheet th.tight-h { letter-spacing: -.4px; }
.sheet td { height: 19px; padding: 2px 0 0 2px; border-right: 1px solid #c4c4c4; border-bottom: 1px solid #c4c4c4; font: 10px/16px "Liberation Mono", monospace; white-space: nowrap; vertical-align: top; }
.sheet td.num { text-align: center; background: #f3f3f3; padding: 2px 0 0; font-size: 10px; }
.sheet .fz { border-right-color: #111; }
.rb { display: inline-block; width: 12px; text-align: center; font: 12px/15px "Noto Sans CJK SC", sans-serif; vertical-align: top; }
.rb.hrb { text-decoration: underline; }
.cur td { background: #a6c9ef; }
.sheet .cur td.num { background: #fdd492; color: #5a0a70; }
.sheet .cur td.cell { background: #8ebbe8; box-shadow: inset 0 0 0 2px #7d7d7d; }
.gridv { background: #f0f0f0; }
.gridt { height: 65px; }
.gridh { height: 18px; padding: 0; }
.gridh .hthumb { width: 538px; height: 16px; background: #c8c8c8; margin-left: 592px; }

/* status */
.status { height: 20px; flex: none; display: flex; gap: 2px; background: #f0f0f0; }
.st { height: 19px; background: #fff; border: 1px solid #d8d8d8; padding: 0 1px; line-height: 17px; white-space: nowrap; flex: none; overflow: hidden; }
.s1 { width: 148px; } .s2 { width: 78px; } .s3 { width: 98px; } .s4 { width: 48px; padding-left: 2px; } .s5 { width: 914px; padding-left: 1px; } .s6 { width: 70px; }

/* taskbar */
.taskbar { height: 40px; flex: none; background: #0d1518; display: grid; grid-template-columns: 48px 344px 49px 51px 50px 49px 46px 41px 41px 41px 40px 39px 41px 40px 40px 50px 65px 27px 24px 26px 26px 28px 28px 78px 38px 14px; color: #fff; }
.tk { display: flex; align-items: center; justify-content: center; position: relative; height: 40px; }
.tk svg { width: 24px; height: 24px; }
.tk.under::after { content: ""; position: absolute; left: 4px; right: 4px; bottom: 0; height: 2px; background: #6cb4e8; }
.tk.active { background: #2c363b; }
.tk.active::after { left: 0; right: 0; }
.start { background: #000; }
.start svg { width: 18px; height: 18px; }
.search { background: #333; justify-content: flex-start; padding-left: 10px; color: #8d8d8d; font-size: 13px; }
.cortana { width: 20px; height: 20px; border: 3px solid #ddd; border-radius: 50%; margin-right: 6px; flex: none; }
.sq { flex: 1; white-space: nowrap; }
.search .micic { width: 12px; height: 18px; margin-right: 13px; }
.link { color: #ddd; font-size: 12px; }
.cpu, .clock { flex-direction: column; font-size: 12px; line-height: 18px; }
.clock { background: #050a0c; align-items: center; }
.tray svg { width: 16px; height: 14px; }
.atxt { font: 18px "Liberation Serif", serif; }

/* overlays */
.ellipse { position: absolute; left: 587px; top: 605px; width: 360px; height: 90px; }
.ime { position: absolute; left: 1160px; top: 677px; width: 206px; height: 23px; background: #fff; border: 1px solid #c4d8ea; border-right: 0; display: flex; align-items: center; gap: 6px; padding-left: 29px; }
.ime svg { width: 16px; height: 16px; flex: none; }
.ime .ime-s { position: absolute; left: -1px; top: -5px; width: 27px; height: 29px; }
.ime-a { font: 20px "Liberation Sans", sans-serif; color: #2a7ac8; width: 16px; }
.ime-c { font: bold 14px "Liberation Sans", sans-serif; color: #2a7ac8; width: 10px; text-align: center; margin-top: -6px; }
```
